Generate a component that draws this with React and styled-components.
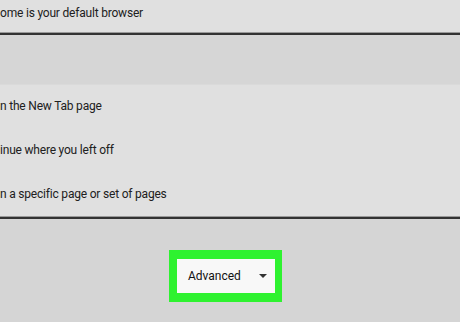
import React from 'react'
import styled, { createGlobalStyle } from 'styled-components'

const GlobalStyle = createGlobalStyle`
  html, body {
    margin: 0;
    padding: 0;
    background: #d5d5d5;
  }
  body {
    font-family: Roboto, "Liberation Sans", Arial, sans-serif;
    width: 460px;
    height: 322px;
    overflow: hidden;
  }
`

const Page = styled.div`
  display: flex;
  flex-direction: column;
  height: 322px;
  background: #d5d5d5;
`

const Panel = styled.div`
  background: #e0e0e0;
  border-bottom: 2px solid #333;
  box-shadow: 0 -1px 0 #9a9a9a inset;
`

const Row = styled.div`
  display: flex;
  align-items: center;
  box-sizing: border-box;
  height: ${p => p.$h}px;
  padding-bottom: ${p => p.$pb || 0}px;
  font-size: 12px;
  letter-spacing: -0.2px;
  color: #202020;
  white-space: nowrap;
`

const Band = styled.div`
  height: 49px;
  background: #d6d6d6;
  border-bottom: 1px solid #dadada;
`

const Footer = styled.div`
  flex: 1;
  display: flex;
  justify-content: center;
  padding: 31px 9px 0 0;
`

const Highlight = styled.div`
  border: 9px solid #2ef230;
  border-left-width: 8px;
  border-right-width: 7px;
  align-self: flex-start;
`

const Button = styled.div`
  width: 98px;
  height: 34px;
  box-sizing: border-box;
  background: #f8f8f8;
  display: flex;
  align-items: center;
  justify-content: space-between;
  padding: 0 8px 0 11px;
  font-size: 12px;
  color: #111;
`

const Caret = () => (
  <svg width="8" height="5" viewBox="0 0 8 5">
    <path d="M0 0 L8 0 L4 4 Z" fill="#333" />
  </svg>
)

export default function App() {
  return (
    <Page>
      <GlobalStyle />
      <Panel>
        <Row $h={33} $pb={8}>ome is your default browser</Row>
      </Panel>
      <Band />
      <Panel>
        <Row $h={44} $pb={2}>n the New Tab page</Row>
        <Row $h={44} $pb={2}>inue where you left off</Row>
        <Row $h={44} $pb={2}>n a specific page or set of pages</Row>
      </Panel>
      <Footer>
        <Highlight>
          <Button>
            Advanced
            <Caret />
          </Button>
        </Highlight>
      </Footer>
    </Page>
  )
}
